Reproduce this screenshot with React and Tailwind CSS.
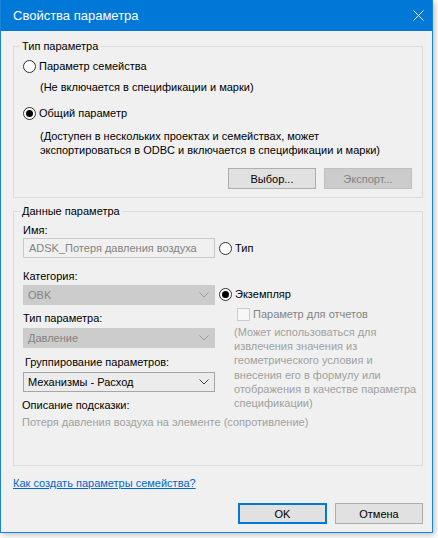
import React from 'react';

const Radio = ({ checked }) => (
  <span className="w-[13px] h-[13px] rounded-full border border-[#333333] bg-white flex items-center justify-center shrink-0">
    {checked && <span className="w-[7px] h-[7px] rounded-full bg-black" />}
  </span>
);

const Chevron = ({ color }) => (
  <svg width="10" height="6" viewBox="0 0 10 6" className="shrink-0">
    <path d="M0.5 0.5 L5 5 L9.5 0.5" fill="none" stroke={color} strokeWidth="1" />
  </svg>
);

const Select = ({ value, disabled }) => (
  <div
    className={
      disabled
        ? 'h-[20px] w-[192px] bg-[#cccccc] border border-[#cccccc] text-[#838383] flex items-center justify-between pl-[4px] pr-[5px]'
        : 'h-[20px] w-[192px] bg-[#ececec] border border-[#a6a6a6] text-black flex items-center justify-between pl-[4px] pr-[5px]'
    }
  >
    <span>{value}</span>
    <Chevron color={disabled ? '#9a9a9a' : '#444444'} />
  </div>
);

const Button = ({ children, disabled, focused }) => (
  <div
    className={
      disabled
        ? 'w-[88px] h-[21px] bg-[#cccccc] border border-[#bfbfbf] text-[#838383] flex items-center justify-center'
        : focused
        ? 'w-[89px] h-[21px] bg-[#e1e1e1] border-2 border-[#0078d7] flex items-center justify-center'
        : 'w-[88px] h-[21px] bg-[#e1e1e1] border border-[#adadad] flex items-center justify-center'
    }
  >
    {children}
  </div>
);

export default function App() {
  return (
    <div className="w-[438px] h-[538px] bg-white font-['Liberation_Sans',Arial,sans-serif] text-[11px] leading-[16px] text-black whitespace-nowrap">
      <div className="w-[433px] h-[533px] bg-[#f0f0f0] border border-t-0 border-[#1883d7] shadow-[2px_2px_6px_rgba(0,0,0,0.25)] flex flex-col">
        {/* Title bar */}
        <div className="h-[31px] bg-[#0078d7] text-white flex items-center justify-between pl-[12px] pr-[8px] shrink-0">
          <span className="text-[13px] leading-[20px]">Свойства параметра</span>
          <svg width="11" height="11" viewBox="0 0 11 11">
            <path d="M0.5 0.5 L10.5 10.5 M10.5 0.5 L0.5 10.5" stroke="white" strokeWidth="1" />
          </svg>
        </div>

        <div className="flex flex-col pl-[12px] pr-[9px]">
          {/* Group 1 */}
          <fieldset className="mt-[7px] border border-[#dcdcdc] pb-[8px]">
            <legend className="ml-[6px] px-[2px]">Тип параметра</legend>
            <div className="mt-[4px] pl-[9px] flex items-center gap-[3px] h-[16px]">
              <Radio />
              <span>Параметр семейства</span>
            </div>
            <div className="mt-[5px] pl-[26px]">(Не включается в спецификации и марки)</div>
            <div className="mt-[10px] pl-[9px] flex items-center gap-[3px] h-[16px]">
              <Radio checked />
              <span>Общий параметр</span>
            </div>
            <div className="mt-[8px] pl-[26px] leading-[14px]">
              (Доступен в нескольких проектах и семействах, может
              <br />
              экспортироваться в ODBC и включается в спецификации и марки)
            </div>
            <div className="mt-[11px] flex justify-end gap-[8px] pr-[10px]">
              <Button>Выбор...</Button>
              <Button disabled>Экспорт...</Button>
            </div>
          </fieldset>

          {/* Group 2 */}
          <fieldset className="mt-[5px] border border-[#dcdcdc] pb-[35px]">
            <legend className="ml-[6px] px-[2px]">Данные параметра</legend>
            <div className="flex pl-[9px] gap-[4px]">
              <div className="flex flex-col w-[192px]">
                <div className="mt-[3px]">Имя:</div>
                <div className="h-[20px] bg-[#f0f0f0] border border-[#cccccc] text-[#838383] flex items-center pl-[5px]">
                  ADSK_Потеря давления воздуха
                </div>
                <div className="mt-[10px]">Категория:</div>
                <div className="mt-[1px]">
                  <Select value="OBK" disabled />
                </div>
                <div className="mt-[5px]">Тип параметра:</div>
                <div className="mt-[2px]">
                  <Select value="Давление" disabled />
                </div>
                <div className="mt-[6px] pl-[2px]">Группирование параметров:</div>
                <div className="mt-[2px]">
                  <Select value="Механизмы - Расход" />
                </div>
                <div className="mt-[5px] -ml-[1px]">Описание подсказки:</div>
              </div>
              <div className="flex flex-col">
                <div className="mt-[21px] flex items-center gap-[3px] h-[16px]">
                  <Radio />
                  <span>Тип</span>
                </div>
                <div className="mt-[30px] flex items-center gap-[3px] h-[16px]">
                  <Radio checked />
                  <span>Экземпляр</span>
                </div>
                <div className="mt-[4px] ml-[18px] flex items-center gap-[3px] h-[16px]">
                  <span className="w-[13px] h-[13px] border border-[#cccccc] bg-[#f7f7f7] shrink-0" />
                  <span className="text-[#838383]">Параметр для отчетов</span>
                </div>
                <div className="mt-[3px] ml-[15px] leading-[14.2px] text-[#a0a0a0]">
                  (Может использоваться для
                  <br />
                  извлечения значения из
                  <br />
                  геометрического условия и
                  <br />
                  внесения его в формулу или
                  <br />
                  отображения в качестве параметра
                  <br />
                  спецификации)
                </div>
              </div>
            </div>
            <div className="mt-[1px] pl-[8px] text-[#a0a0a0]">
              Потеря давления воздуха на элементе (сопротивление)
            </div>
          </fieldset>

          <a className="mt-[9px] text-[#0066cc] underline self-start">Как создать параметры семейства?</a>

          <div className="mt-[12px] flex justify-end gap-[8px]">
            <Button focused>OK</Button>
            <Button>Отмена</Button>
          </div>
        </div>
      </div>
    </div>
  );
}
